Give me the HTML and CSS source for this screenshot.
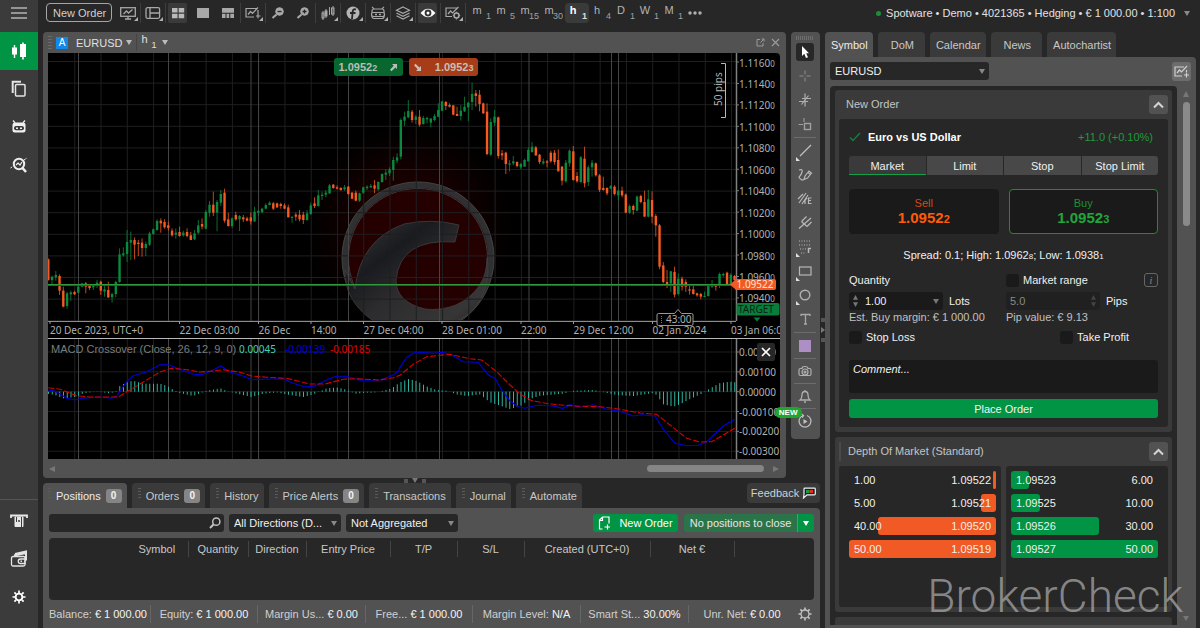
FILE: index.html
```html
<!DOCTYPE html>
<html lang="en">
<head>
<meta charset="utf-8">
<title>EURUSD h1 - Trading platform</title>
<link rel="stylesheet" href="styles.css">
</head>
<body>
<div class="app">
  <nav class="rail" aria-label="Main">
    <button class="rail-menu" aria-label="Menu"><svg width="16" height="12" viewBox="0 0 16 12" stroke="#b4b4b4" stroke-width="1.3"><path d="M0 1h16M0 6h16M0 11h16"/></svg></button>
    <button class="rail-item active" aria-label="Trade"><svg width="16" height="18" viewBox="0 0 16 18" fill="#fff"><path d="M2 5.500h.8V3h1.400v2.500H6v7H4.200V16H2.800v-3.500H1v-7zM10 2h1.200V.5h1.600V2H15v13h-2.200v2.500h-1.600V15H9V2z"/></svg></button>
    <button class="rail-item" aria-label="Copy"><svg width="16" height="18" viewBox="0 0 16 18" fill="none" stroke="#e4e4e4" stroke-width="1.5"><rect x="4.500" y="4.500" width="9.500" height="11.500" rx="1"/><path d="M1.700 13V1.700H10" stroke-width="2"/></svg></button>
    <button class="rail-item" aria-label="Automate"><svg width="16" height="16" viewBox="0 0 16 16"><path d="M2 1.500l2 2.200M14 1.500l-2 2.200" stroke="#eee" stroke-width="1.300"/><path d="M4 3.500h8q2.500 0 2.500 2.500v5.500q0 2-2 2h-9q-2 0-2-2V6q0-2.500 2.500-2.500z" fill="#f0f0f0"/><rect x="3" y="7" width="10" height="4.300" rx="2" fill="#3b3b3b"/><path d="M5 9.200h2M9 9.200h2" stroke="#f0f0f0" stroke-width="1.400"/></svg></button>
    <button class="rail-item" aria-label="Analyze"><svg width="18" height="16" viewBox="0 0 18 16" fill="none" stroke="#eee"><circle cx="9" cy="7" r="5.200" stroke-width="2"/><path d="M12.500 11l3.500 4" stroke-width="2.500"/><path d="M.5 11l3-2M14 3l3-2" stroke-dasharray="2 1"/><path d="M6 8l2-2 2 2 2-3" stroke-width="1.200"/></svg></button>
    <span class="rail-gap"></span>
    <button class="rail-item" aria-label="Deposit"><svg width="18" height="16" viewBox="0 0 18 16" fill="none" stroke="#e8e8e8"><path d="M1 5V2.500h16V5" stroke-width="1.800"/><path d="M5 4h8v9.500H5z" fill="#e8e8e8"/><path d="M6.500 4v5M11.500 4v10" stroke="#3b3b3b"/><circle cx="9" cy="8" r="1" fill="#3b3b3b" stroke="none"/></svg></button>
    <button class="rail-item" aria-label="Wallet"><svg width="18" height="18" viewBox="0 0 18 18" fill="none" stroke="#e4e4e4" stroke-width="1.300"><path d="M5 4l11-2.500v9M4 5.500L16 3" stroke-width="2"/><rect x="1.500" y="6.500" width="13.500" height="9.500" rx="1.500" fill="#3b3b3b"/><path d="M15 9h-4.500a2 2 0 0 0 0 4.500H15z"/><path d="M10.500 11.200h1.500" stroke-width="1.600"/></svg></button>
    <button class="rail-item" aria-label="Settings"><svg width="14" height="14" viewBox="0 0 14 14" fill="none" stroke="#fff"><circle cx="7" cy="7" r="3.400" stroke-width="1.900"/><path d="M7 .5v2.500M7 11v2.500M.5 7H3M11 7h2.500M2.400 2.400l1.700 1.700M9.900 9.900l1.700 1.700M2.400 11.600l1.700-1.700M9.900 4.100l1.700-1.700" stroke-width="1.700"/></svg></button>
    <button class="rail-item" aria-label="Help"><svg width="16" height="16" viewBox="0 0 16 16" fill="none" stroke="#ddd" stroke-width="1.500"><circle cx="8" cy="8" r="6"/></svg></button>
  </nav>

  <div class="workspace">
    <header class="topbar">
      <button class="new-order">New Order</button>
      <div class="tools">
        <button class="tool sub sep" aria-label="Chart type"><svg viewBox="0 0 16 14" fill="none" stroke="#a8a8a8" stroke-width="1.300"><rect x=".7" y="1.700" width="14.600" height="8.600"/><path d="M5 13h6M8 10v3M3.500 8l3-3 2 2 4-3.500"/></svg></button>
        <button class="tool sub sep" aria-label="Layouts"><svg viewBox="0 0 16 14" fill="none" stroke="#a8a8a8" stroke-width="1.300"><rect x="1" y="1.700" width="13.600" height="10.600" rx="1.500"/><path d="M5 2v10M5 7h9.500"/></svg></button>
        <button class="tool on" aria-label="Grid"><svg viewBox="0 0 16 14" fill="#b9b9b9"><path d="M2 2h5.500v4.500H2zM8.700 2h5.500v4.500H8.700zM2 7.700h5.500v4.500H2zM8.700 7.700h5.500v4.500H8.700z"/></svg></button>
        <button class="tool" aria-label="Single"><svg viewBox="0 0 16 14" fill="#a8a8a8"><path d="M2 2h12v10H2z"/></svg></button>
        <button class="tool" aria-label="Multi"><svg viewBox="0 0 16 14" fill="#a8a8a8"><path d="M2 2h12v4.700H2zM2 7.800h3.500V12H2zM6.500 7.800h2.700V12H6.500zM10.300 7.800H14V12h-3.700z"/></svg></button>
        <button class="tool sub sep-l sep" aria-label="New chart"><svg viewBox="0 0 16 14" fill="none" stroke="#a8a8a8" stroke-width="1.200"><path d="M9 11H1V2.500h11M3 8.500l2.500-3 2 2 5.500-6M13 4v4M11 10h4.500M13 7.800v4.500"/></svg></button>
        <button class="tool" aria-label="Zoom out"><svg viewBox="0 0 16 14" fill="none" stroke="#a8a8a8"><circle cx="9.500" cy="5.500" r="3.800" fill="#a8a8a8"/><path d="M7.500 5.500h4" stroke="#272727" stroke-width="1.300"/><path d="M6.500 8.500L2.500 12" stroke-width="2"/></svg></button>
        <button class="tool" aria-label="Zoom in"><svg viewBox="0 0 16 14" fill="none" stroke="#a8a8a8"><circle cx="9.500" cy="5.500" r="3.800" fill="#a8a8a8"/><path d="M7.500 5.500h4M9.500 3.500v4" stroke="#272727" stroke-width="1.300"/><path d="M6.500 8.500L2.500 12" stroke-width="2"/></svg></button>
        <button class="tool sub sep-l sep" aria-label="Candles"><svg viewBox="0 0 16 14" fill="none" stroke="#a8a8a8"><path d="M3 5v9M6 3v9M13 0v10"/><rect x="2" y="7" width="2" height="5"/><rect x="5" y="5" width="2" height="5" fill="#a8a8a8"/><rect x="11.500" y="2" width="2.500" height="6"/><path d="M9.500 1v8"/></svg></button>
        <button class="tool sub sep" aria-label="Indicators"><svg viewBox="0 0 16 14"><circle cx="8" cy="7" r="6.500" fill="#b4b4b4"/><path d="M11 3.500q-3-1-3.300 2L7 13M5 7h5.500" fill="none" stroke="#272727" stroke-width="1.800"/></svg></button>
        <button class="tool sub sep" aria-label="Robots"><svg viewBox="0 0 16 14" fill="none" stroke="#a8a8a8" stroke-width="1.200"><path d="M2 .8l2 2M14 .8l-2 2"/><rect x="2" y="3" width="12" height="9.500" rx="2"/><rect x="1.500" y="6.500" width="13" height="4" rx="2" fill="#272727"/><path d="M5 8.500h2M9 8.500h2" stroke-width="1.600"/></svg></button>
        <button class="tool sub sep" aria-label="Objects"><svg viewBox="0 0 16 14" fill="none" stroke="#a8a8a8" stroke-width="1.200"><path d="M8 1l6.500 3.200L8 7.400 1.500 4.200zM1.500 7L8 10.300 14.500 7M1.500 9.800L8 13l6.500-3.200"/></svg></button>
        <button class="tool on" aria-label="Visibility"><svg viewBox="0 0 16 14"><path d="M.5 7Q8-1.500 15.500 7 8 15.500.5 7z" fill="#fff"/><circle cx="8" cy="7" r="3.400" fill="#333"/><circle cx="8" cy="7" r="1.500" fill="#fff"/></svg></button>
        <button class="tool sub sep-l sep" aria-label="Chart settings"><svg viewBox="0 0 16 14" fill="none" stroke="#a8a8a8" stroke-width="1.200"><path d="M7 10.500H1V2h12M3 8l2.500-3 2 2L13.500 1"/><circle cx="11.500" cy="9.500" r="2.500" stroke-width="1.500"/><path d="M11.500 5.700v1M11.500 12.300v1.200M7.800 9.500h1M14 9.500h1.200" /></svg></button>
        <button class="tf">m<sub>1</sub></button>
        <button class="tf">m<sub>5</sub></button>
        <button class="tf">m<sub>15</sub></button>
        <button class="tf">m<sub>30</sub></button>
        <button class="tf on">h<sub>1</sub></button>
        <button class="tf">h<sub>4</sub></button>
        <button class="tf">D<sub>1</sub></button>
        <button class="tf">W<sub>1</sub></button>
        <button class="tf">M<sub>1</sub></button>
        <button class="tool more" aria-label="More"><svg viewBox="0 0 16 14" fill="#b0b0b0"><circle cx="3" cy="7" r="1.700"/><circle cx="8" cy="7" r="1.700"/><circle cx="13" cy="7" r="1.700"/></svg></button>
      </div>
      <button class="account"><i class="online"></i><span>Spotware • Demo • 4021365 • Hedging • € 1 000.00 • 1:100</span><i class="caret"></i></button>
    </header>

    <div class="columns">
      <main class="center">
        <div class="chart-row">
          <section class="chart-frame" aria-label="Chart">
            <div class="chart-head">
              <i class="grip"></i>
              <button class="link-badge">A</button>
              <button class="pick symbol">EURUSD<i class="caret"></i></button>
              <button class="pick period"><span>h<sub>1</sub></span><i class="caret"></i></button>
              <span class="spacer"></span>
              <button class="win" aria-label="Detach"><svg width="9" height="9" viewBox="0 0 9 9" fill="none" stroke="#9a9a9a"><path d="M4 1.500H1v6.500h6V5M5.500 1H8v2.500M8 1L4.500 4.500"/></svg></button>
              <button class="win" aria-label="Close"><svg width="9" height="9" viewBox="0 0 9 9" stroke="#9a9a9a" stroke-width="1.200"><path d="M1 1l7 7M8 1L1 8"/></svg></button>
            </div>
            <div class="plot">
              <svg id="chart" viewBox="48 53 732 406" role="img" aria-label="EURUSD hourly candles with MACD"></svg>
              <div class="quick">
                <button class="quick-sell"><b>1.0952<small>2</small></b><svg width="9" height="9" viewBox="0 0 9 9" fill="#b9beb9"><path d="M3 1h5v5L6.400 4.400 2.500 8.300 1 6.800l3.700-4z"/></svg></button>
                <button class="quick-buy"><svg width="9" height="9" viewBox="0 0 9 9" fill="#c9bdb8"><path d="M3 8h5V3L6.400 4.600 2.500 .7 1 2.200l3.700 4z"/></svg><b>1.0952<small>3</small></b></button>
              </div>
              <button class="close-ind" aria-label="Remove indicator"><svg width="10" height="10" viewBox="0 0 10 10" stroke="#fff" stroke-width="1.700"><path d="M1 1l8 8M9 1L1 9"/></svg></button>
            </div>
            <div class="hscroll"><i class="tri left"></i><span class="track"><i class="thumb"></i></span><i class="tri right"></i></div>
          </section>

          <aside class="drawbar" aria-label="Drawing tools">
            <i class="grip wide"></i>
            <button class="dt on" aria-label="Pointer"><svg viewBox="0 0 16 16" fill="#fff"><path d="M5 2v10l2.300-2.200L9 14l2-.8-1.800-4H12z"/></svg></button>
            <button class="dt" aria-label="Crosshair"><svg viewBox="0 0 16 16" stroke="#8c8c8c"><path d="M8 2.500v4M8 9.500v4M2.500 8h4M9.500 8h4"/></svg></button>
            <button class="dt" aria-label="Magnet"><svg viewBox="0 0 16 16" stroke="#b0b0b0" stroke-width="1.200"><path d="M8 1.500v13M2 9.500h9M5 6.500h9M4.500 12.500l7-9"/></svg></button>
            <button class="dt" aria-label="Snap"><svg viewBox="0 0 16 16" fill="none" stroke="#a0a0a0"><path d="M7 2v4M1.500 8.500H6"/><rect x="7.500" y="7.500" width="6" height="6" stroke-width="1.400"/></svg></button>
            <hr>
            <button class="dt sub" aria-label="Line"><svg viewBox="0 0 16 16" stroke="#c0c0c0" stroke-width="1.300"><path d="M3 13L14 2"/></svg></button>
            <button class="dt" aria-label="Pencil"><svg viewBox="0 0 16 16" fill="none" stroke="#b8b8b8" stroke-width="1.200"><path d="M2 3q4-1.500 3 2T2.500 9.500 5 13l2-.5M7 12.500l1-3.500 4-5 2.500 2-4 5zM11 5.500l2.300 1.800"/></svg></button>
            <button class="dt" aria-label="Waves"><svg viewBox="0 0 16 16" fill="none" stroke="#b8b8b8" stroke-width="1.200"><path d="M1 8l5-5M2 12l7-10M5 13l6-9M8 13V9l2-2M14.500 7h-3v5.500h3M11.500 9.500h2.500"/></svg></button>
            <button class="dt" aria-label="Pitchfork"><svg viewBox="0 0 16 16" fill="none" stroke="#b8b8b8" stroke-width="1.200"><path d="M2 13.500L14 3M4.500 6.500l5.500 5M4.500 6.500l5-5M10 11.500l4.500-4.500"/></svg></button>
            <button class="dt sub" aria-label="Fibonacci"><svg viewBox="0 0 16 16" stroke="#b8b8b8"><path d="M2 2h12M2 6h12M3 10h6M4 14h5" stroke-dasharray="1 1.500"/><path d="M11.500 14V9.500H14" fill="none" stroke-width="1.500"/></svg></button>
            <button class="dt sub" aria-label="Rectangle"><svg viewBox="0 0 16 16" fill="none" stroke="#b8b8b8" stroke-width="1.200"><rect x="2.500" y="4" width="11.500" height="8"/></svg></button>
            <button class="dt sub" aria-label="Ellipse"><svg viewBox="0 0 16 16" fill="none" stroke="#b0b0b0" stroke-width="1.400"><circle cx="8" cy="8" r="4.800"/></svg></button>
            <button class="dt" aria-label="Text"><svg viewBox="0 0 16 16" fill="none" stroke="#a8a8a8" stroke-width="1.300"><path d="M4 5V3.500h9V5M8.500 3.500V13M7 13h3"/></svg></button>
            <hr>
            <button class="dt" aria-label="Colour"><i class="swatch"></i></button>
            <hr class="tight">
            <button class="dt" aria-label="Snapshot"><svg viewBox="0 0 16 16" fill="none" stroke="#b0b0b0" stroke-width="1.200"><path d="M5 5.500q0-2 3-2t3 2h1.500q1.500 0 1.500 1.500v4q0 1.500-1.500 1.500h-9Q2 12.500 2 11V7q0-1.500 1.500-1.500z"/><ellipse cx="8" cy="9" rx="3" ry="3"/><circle cx="8" cy="9" r="1"/></svg></button>
            <hr class="tight">
            <button class="dt" aria-label="Alert"><svg viewBox="0 0 16 16" fill="none" stroke="#b0b0b0" stroke-width="1.300"><path d="M3 12q2-1.500 2-5 0-3.500 3-3.500t3 3.500q0 3.500 2 5zM7 14h2M8 2v1.500"/></svg></button>
            <hr class="tight">
            <button class="dt" aria-label="Replay"><svg viewBox="0 0 16 16" fill="none" stroke="#c0c0c0" stroke-width="1.300"><path d="M6 2.500A6 6 0 1 0 10 2.500M4.500 1l2 1.600-1.500 2"/><path d="M6.500 6v5l4-2.500z" fill="#c0c0c0" stroke="none"/></svg><span class="new">NEW</span></button>
          </aside>
        </div>

        <div class="split-h"><i></i><i class="tri down"></i><i></i></div>

        <section class="trade" aria-label="Trade watch">
          <div class="tabs">
            <button class="tab gripped active">Positions<span class="count">0</span></button>
            <button class="tab gripped">Orders<span class="count">0</span></button>
            <button class="tab gripped">History</button>
            <button class="tab gripped">Price Alerts<span class="count">0</span></button>
            <button class="tab gripped">Transactions</button>
            <button class="tab gripped">Journal</button>
            <button class="tab gripped">Automate</button>
            <button class="feedback">Feedback<svg width="14" height="12" viewBox="0 0 14 12"><path d="M3 1.200h9.500q.8 0 .8.800v5q0 .8-.8.800H5L1.500 11 2 7.500V2q0-.8 1-.8z" fill="#123" stroke="#eee" stroke-width="1.200"/><path d="M4 3h3.500v3H4z" fill="#1c9a40"/><path d="M7.500 3H11v3H7.500z" fill="#e03020"/></svg></button>
          </div>
          <div class="trade-body">
            <div class="filters">
              <label class="search"><input type="text" aria-label="Search positions"><svg width="12" height="12" viewBox="0 0 12 12" fill="none" stroke="#c0c0c0" stroke-width="1.500"><circle cx="7.300" cy="4.700" r="3.600"/><path d="M4.700 7.300L1 11" stroke-width="2"/></svg></label>
              <span class="select"><select aria-label="Direction"><option>All Directions (D...</option></select></span>
              <span class="select"><select aria-label="Aggregation"><option>Not Aggregated</option></select></span>
              <span class="spacer"></span>
              <button class="go"><svg width="13" height="14" viewBox="0 0 13 14" fill="none" stroke="#fff" stroke-width="1.200"><path d="M4.500 13H1.500V4l3-3H11v6.500M1.500 4.500h3V1M6.500 11H12M9.500 8.500v5"/></svg>New Order</button>
              <span class="closer"><button class="close-all">No positions to close</button><button class="close-more" aria-label="Close options"><i class="caret"></i></button></span>
            </div>
            <div class="grid-wrap">
              <table class="positions">
                <colgroup><col class="c-pad"><col class="c-sym"><col class="c-qty"><col class="c-dir"><col class="c-entry"><col class="c-tp"><col class="c-sl"><col class="c-date"><col class="c-net"><col></colgroup>
                <thead><tr><td></td><th>Symbol</th><th>Quantity</th><th>Direction</th><th>Entry Price</th><th>T/P</th><th>S/L</th><th>Created (UTC+0)</th><th>Net €</th><td></td></tr></thead>
              </table>
            </div>
            <div class="status">
              <span>Balance: <b>€ 1 000.00</b></span>
              <span>Equity: <b>€ 1 000.00</b></span>
              <span>Margin Us... <b>€ 0.00</b></span>
              <span>Free... <b>€ 1 000.00</b></span>
              <span>Margin Level: <b>N/A</b></span>
              <span>Smart St... <b>30.00%</b></span>
              <span>Unr. Net: <b>€ 0.00</b></span>
              <button aria-label="Status settings"><svg width="14" height="14" viewBox="0 0 14 14" fill="none" stroke="#c4c4c4"><circle cx="7" cy="7" r="4" stroke-width="1.300"/><path d="M7 .5v2.300M7 11.200v2.300M.5 7h2.300M11.200 7h2.300M2.400 2.400l1.700 1.700M9.900 9.900l1.700 1.700M2.400 11.600l1.700-1.700M9.900 4.100l1.700-1.700" stroke-width="1.600"/></svg></button>
            </div>
          </div>
        </section>
      </main>

      <div class="split-v"><i></i><i class="tri right"></i><i></i></div>

      <aside class="side" aria-label="Symbol panel">
        <div class="tabs">
          <button class="tab active">Symbol</button>
          <button class="tab">DoM</button>
          <button class="tab">Calendar</button>
          <button class="tab">News</button>
          <button class="tab">Autochartist</button>
        </div>
        <div class="side-body">
          <div class="side-head">
            <span class="select"><select aria-label="Symbol"><option>EURUSD</option></select></span>
            <button class="add-chart" aria-label="Open chart"><svg width="15" height="13" viewBox="0 0 15 13" fill="none" stroke="#d0d0d0" stroke-width="1.200"><path d="M8 11H1V2h9M3 8l2.500-3 2 2L13 1M12.500 5v2M10 10h5M12.500 7.500v5"/></svg></button>
          </div>
          <div class="side-scroll">
            <div class="cards">
              <section class="card">
                <header><h2>New Order</h2><button class="fold" aria-label="Collapse"><svg width="11" height="8" viewBox="0 0 11 8" fill="none" stroke="#d4d4d4" stroke-width="2"><path d="M1 6.500l4.500-4.500L10 6.500"/></svg></button></header>
                <form class="order">
                  <div class="instrument"><svg width="12" height="10" viewBox="0 0 12 10" fill="none" stroke="#14803c" stroke-width="1.300"><path d="M1 5.500l3 3L11 1"/></svg><strong>Euro vs US Dollar</strong><span class="delta">+11.0 (+0.10%)</span></div>
                  <div class="types"><button type="button" class="on">Market</button><button type="button">Limit</button><button type="button">Stop</button><button type="button">Stop Limit</button></div>
                  <div class="sides">
                    <button type="button" class="sell">Sell<b>1.0952<small>2</small></b></button>
                    <button type="button" class="buy">Buy<b>1.0952<small>3</small></b></button>
                  </div>
                  <p class="spread">Spread: 0.1; High: 1.0962<small>8</small>; Low: 1.0938<small>1</small></p>
                  <div class="fields">
                    <div class="field">
                      <label class="caption" for="qty">Quantity</label>
                      <div class="entry"><span class="box"><i class="step"></i><input id="qty" type="text" value="1.00"><i class="caret"></i></span><span>Lots</span></div>
                      <span class="note">Est. Buy margin: € 1 000.00</span>
                    </div>
                    <div class="field">
                      <div class="caption"><label><input type="checkbox">Market range</label><button type="button" class="info"><em>i</em></button></div>
                      <div class="entry"><span class="box off"><input type="text" aria-label="Range" value="5.0" disabled><i class="step"></i></span><span>Pips</span></div>
                      <span class="note">Pip value: € 9.13</span>
                    </div>
                  </div>
                  <div class="protect"><label><input type="checkbox">Stop Loss</label><label><input type="checkbox">Take Profit</label></div>
                  <textarea aria-label="Comment" placeholder="Comment..."></textarea>
                  <button type="button" class="place">Place Order</button>
                </form>
              </section>
              <section class="card dom">
                <header><h2>Depth Of Market (Standard)</h2><button class="fold" aria-label="Collapse"><svg width="11" height="8" viewBox="0 0 11 8" fill="none" stroke="#d4d4d4" stroke-width="2"><path d="M1 6.500l4.500-4.500L10 6.500"/></svg></button></header>
                <div class="book">
                  <ul class="bids">
                    <li><i style="width:2%"></i><span>1.00</span><span>1.09522</span></li>
                    <li><i style="width:10%"></i><span>5.00</span><span>1.09521</span></li>
                    <li><i style="width:80%"></i><span>40.00</span><span>1.09520</span></li>
                    <li><i style="width:100%"></i><span>50.00</span><span>1.09519</span></li>
                  </ul>
                  <ul class="asks">
                    <li><i style="width:12%"></i><span>1.09523</span><span>6.00</span></li>
                    <li><i style="width:20%"></i><span>1.09525</span><span>10.00</span></li>
                    <li><i style="width:60%"></i><span>1.09526</span><span>30.00</span></li>
                    <li><i style="width:100%"></i><span>1.09527</span><span>50.00</span></li>
                  </ul>
                </div>
              </section>
              <section class="card next"></section>
            </div>
            <div class="vscroll"><i class="tri up"></i><i class="thumb"></i><span class="spacer"></span><i class="tri down"></i></div>
          </div>
        </div>
      </aside>
    </div>
  </div>
  <div class="brand">BrokerCheck</div>
</div>
<script src="chart.js"></script>
</body>
</html>
```

FILE: styles.css
```css
* { box-sizing: border-box; }
body { margin: 0; background: #272727; color: #dcdcdc; font: 11px/14px "Liberation Sans", Arial, sans-serif; }
button, input, select, textarea { font: inherit; color: inherit; background: none; border: 0; padding: 0; margin: 0; border-radius: 0; outline: 0; }
button { white-space: nowrap; }
h2, p, ul { margin: 0; padding: 0; font-size: 11px; font-weight: normal; list-style: none; }
i { display: block; flex: none; }
svg { display: block; flex: none; }
.spacer { flex: 1; }

.app { display: flex; height: 100vh; overflow: hidden; position: relative; }

.rail { width: 38px; flex: none; background: #3b3b3b; display: flex; flex-direction: column; overflow: hidden; }
.rail button { display: flex; align-items: center; justify-content: center; height: 38px; flex: none; }
.rail .rail-menu { height: 32px; padding-bottom: 6px; }
.rail .active { background: #009444; }
.rail-gap { flex: 1; margin-bottom: 2px; border-bottom: 1px solid #555; }
.rail button:last-child { margin-bottom: -26px; }

.workspace { flex: 1; min-width: 0; display: flex; flex-direction: column; padding: 0 4px 0 5px; }
.topbar { height: 32px; flex: none; display: flex; align-items: flex-start; padding: 3px 6px 0 3px; }
.new-order { height: 19px; padding: 0 6px; margin-right: 3px; border: 1px solid #a6a6a6; border-radius: 4px; color: #cfcfcf; width: 66px; }
.tools { display: flex; }
.tool { position: relative; width: 25px; height: 20px; display: flex; align-items: center; justify-content: center; }
.tool svg { width: 16px; height: 14px; }
.tool.sep { box-shadow: 1px 0 #3e3e3e; }
.tool.sep-l { border-left: 1px solid #3e3e3e; }
.tool.on { background: #3a3a3a; background-clip: content-box; padding: 0 3px; border-radius: 4px; }
.sub::after { content: ""; position: absolute; right: 2px; bottom: 2px; border: 2px solid transparent; border-right-color: #b0b0b0; border-bottom-color: #b0b0b0; }
.tf { position: relative; width: 24px; height: 20px; color: #b4b4b4; line-height: 14px; padding: 0 8px 6px 0; }
.sep + .tf { margin-left: 4px; }
.tf sub { position: absolute; right: 2px; top: 7px; font-size: 9px; line-height: 12px; color: #a0a0a0; }
.tf.on { background: #3a3a3a; border-radius: 4px; color: #fff; font-weight: bold; }
.tf.on sub { color: #ddd; }
.more { width: 20px; }
.account { margin-left: auto; display: flex; align-items: center; height: 20px; color: #e2e2e2; }
.online { width: 5px; height: 5px; border-radius: 50%; background: #1c8f35; margin-right: 5px; }
.account .caret { margin-left: 9px; }
.caret { border: 3px solid transparent; border-top: 5px solid #8a8a8a; border-bottom: 0; }

.columns { flex: 1; min-height: 0; display: flex; }
.center { flex: 1; min-width: 0; display: flex; flex-direction: column; }
.chart-row { display: flex; gap: 5px; align-items: flex-start; }
.chart-frame { flex: 1; min-width: 0; background: #525252; border-radius: 4px; padding: 0 6px 0 5px; }
.chart-head { height: 21px; display: flex; align-items: center; color: #e0e0e0; }
.grip { width: 4px; height: 14px; background: repeating-linear-gradient(#6a6a6a 0 1px, transparent 1px 3px); }
.link-badge { width: 12px; height: 12px; margin: 0 8px 0 4px; background: #1189ea; color: #fff; font-size: 10px; line-height: 12px; }
.pick { display: flex; align-items: center; gap: 4px; }
.pick .caret { border-top-color: #bcbcbc; }
.period { border-left: 1px solid #444; margin-left: 4px; padding-left: 4px; gap: 5px; height: 17px; }
.period span { line-height: 12px; padding-bottom: 4px; }
.period sub { font-size: 9px; line-height: 8px; vertical-align: -5px; margin-left: 4px; }
.win { margin-left: 6px; }
.plot { position: relative; }
.plot svg#chart { width: 100%; height: auto; background: #000; border-radius: 0 4px 0 0; }
.quick { position: absolute; left: 39%; top: 5px; display: flex; gap: 6px; margin-left: 1px; }
.quick button { width: 69px; height: 18px; border-radius: 3px; display: flex; align-items: center; justify-content: space-between; padding: 0 5px 0 4px; }
.quick-sell { background: #08662f; color: #b9beb9; }
.quick-buy { background: #a63d18; color: #c9bdb8; }
.quick small { font-size: 9px; }
.close-ind { position: absolute; right: 5px; top: 290px; width: 18px; height: 18px; background: #272727; border-radius: 2px; display: flex; align-items: center; justify-content: center; }
.hscroll { height: 19px; display: flex; align-items: center; padding: 0 1px; }
.track { flex: 1; display: flex; justify-content: flex-end; padding-right: 9px; }
.hscroll .thumb { width: 117px; height: 7px; border-radius: 4px; background: #858585; }
.tri { border: 3px solid transparent; }
.tri.left { border-right: 6px solid #777; border-left: 0; }
.tri.right { border-left: 6px solid #777; border-right: 0; }
.tri.up { border-bottom: 6px solid #777; border-top: 0; }
.tri.down { border-top: 5px solid #777; border-bottom: 0; }

.drawbar { width: 29px; flex: none; background: #525252; border-radius: 4px; padding: 4px 2px 6px 0; display: flex; flex-direction: column; align-items: center; }
.grip.wide { width: 18px; height: 4px; background: repeating-linear-gradient(90deg, #6e6e6e 0 1px, transparent 1px 2px); }
.dt { position: relative; width: 20px; height: 24px; display: flex; align-items: center; justify-content: center; }
.dt svg { width: 16px; height: 16px; }
.dt.on svg { width: 18px; height: 18px; padding: 1px; background: #272727; border-radius: 3px; }
.dt.sub::after { left: 1px; right: auto; border-color: transparent transparent #e0e0e0 #e0e0e0; }
.drawbar hr { width: 22px; height: 1px; border: 0; background: #6c6c6c; margin: 1px 0; flex: none; }
.drawbar hr.tight { margin: 0; }
.swatch { width: 12px; height: 12px; background: #ad8fc6; }
.new { position: absolute; right: 13px; top: -2px; padding: 0 4px; border-radius: 6px; background: #1fa62c; color: #fff; font: bold 8px/11px "Liberation Sans", sans-serif; }

.split-h { height: 5px; flex: none; padding-right: 34px; display: flex; align-items: center; justify-content: center; gap: 4px; }
.split-h i:not(.tri), .split-v i:not(.tri) { width: 4px; height: 4px; background: #555; }
.split-v { width: 5px; flex: none; display: flex; flex-direction: column; align-items: center; justify-content: center; gap: 5px; }
.split-v .tri { border-left-width: 4px; }

.tabs { display: flex; gap: 5px; height: 25px; flex: none; }
.tab { height: 25px; background: #3a3a3a; color: #c8c8c8; border-radius: 4px 4px 0 0; padding: 0 6px; display: flex; align-items: center; gap: 5px; }
.tab.active { background: #525252; color: #ececec; }
.tab.gripped { padding: 0 5px 0 5px; }
.tab.gripped ~ .gripped { padding-left: 6px; }
.gripped::before { content: ""; width: 3px; height: 12px; margin-bottom: 4px; background: repeating-linear-gradient(#5a5a5a 0 1px, transparent 1px 3px); }
.count { width: 16px; height: 14px; border-radius: 3px; background: #858585; color: #f4f4f4; font-weight: bold; font-size: 10px; text-align: center; }
.trade { flex: 1; min-height: 0; display: flex; flex-direction: column; }
.feedback { margin-left: auto; height: 20px; width: 73px; background: #3a3a3a; border-radius: 4px; color: #d0d0d0; display: flex; align-items: center; justify-content: center; gap: 3px; }
.trade-body { flex: 1; background: #525252; border-radius: 0 4px 0 0; padding: 6px 6px 0; display: flex; flex-direction: column; }
.filters { display: flex; gap: 5px; height: 18px; }
.search, .select { background: #272727; border-radius: 3px; display: flex; align-items: center; }
.search { width: 175px; padding: 0 3px 0 6px; }
.search input { flex: 1; min-width: 0; }
.select { width: 112px; position: relative; }
.select select { appearance: none; width: 100%; height: 18px; padding: 0 5px 1px; color: #f0f0f0; line-height: 16px; }
.select::after { content: ""; position: absolute; right: 4px; top: 7px; border: 3px solid transparent; border-top: 5px solid #888; border-bottom: 0; pointer-events: none; }
.go { background: #009444; color: #fff; border-radius: 3px; width: 85px; display: flex; align-items: center; justify-content: center; gap: 8px; }
.closer { display: flex; margin-left: 1px; }
.close-all { width: 113px; background: #2b7449; color: #e6e6e6; border-radius: 3px 0 0 3px; }
.close-more { width: 17px; background: #009444; border-left: 1px solid #4d9a6b; border-radius: 0 3px 3px 0; padding: 0 5px; }
.close-more .caret { border-top-color: #fff; }
.grid-wrap { flex: 1; margin-top: 6px; background: #272727; border-radius: 4px; padding-top: 3px; }
.positions { width: 100%; table-layout: fixed; border-collapse: collapse; color: #c8c8c8; }
.positions th { height: 16px; padding: 0; font-weight: normal; text-align: center; border-right: 1px solid #444; }
.positions td { padding: 0; }
.c-pad { width: 77px; }
.c-sym { width: 62px; }
.c-qty { width: 60px; }
.c-dir { width: 58px; }
.c-entry, .c-net { width: 84px; }
.c-tp, .c-sl { width: 67px; }
.c-date { width: 126px; }
.status { height: 28px; flex: none; display: grid; grid-template-columns: 102fr 107fr 108fr 107fr 108fr 108fr 106fr 19px; align-items: center; color: #d0d0d0; }
.status span { text-align: center; line-height: 18px; border-right: 1px solid #666; white-space: nowrap; }
.status span:first-child { text-align: left; }
.status span:nth-child(7) { border: 0; }
.status b { color: #f4f4f4; font-weight: normal; }
.status button { display: flex; justify-content: center; }

.side { width: 371px; flex: none; display: flex; flex-direction: column; }
.side .tab { padding: 0 5px 0 6px; }
.side .tab:nth-child(2), .side .tab:nth-child(4) { padding: 0 11px 0 13px; }
.side-body { flex: 1; min-height: 0; background: #525252; border-radius: 0 4px 0 0; padding: 5px 5px 3px; display: flex; flex-direction: column; }
.side-head { display: flex; justify-content: space-between; height: 24px; }
.side-head .select { width: 159px; height: 18px; }
.add-chart { width: 19px; height: 19px; background: #6c6c6c; border-radius: 3px; display: flex; align-items: center; justify-content: center; }
.side-scroll { flex: 1; min-height: 0; display: flex; }
.cards { flex: 1; background: #272727; border-radius: 4px 4px 0 0; padding: 4px 5px 0; overflow: hidden; display: flex; flex-direction: column; gap: 5px; }
.vscroll { width: 14px; display: flex; flex-direction: column; align-items: center; gap: 5px; padding: 5px 0 4px 4px; }
.vscroll .thumb { width: 7px; height: 124px; border-radius: 4px; background: #8a8a8a; }
.card { background: #3a3a3a; border-radius: 3px; padding: 5px 4px 5px; flex: none; }
.card header { height: 24px; display: flex; justify-content: space-between; padding: 0 0 0 7px; }
.card h2 { line-height: 18px; color: #c4c4c4; }
.dom header { padding-left: 9px; box-shadow: inset 2px 0 #4a4a4a; height: 19px; margin-bottom: 5px; }
.fold { width: 19px; height: 19px; background: #525252; border-radius: 3px; display: flex; align-items: center; justify-content: center; }
.order { background: #272727; border-radius: 3px; padding: 9px 10px; display: flex; flex-direction: column; }
.instrument { display: flex; align-items: center; height: 18px; padding-right: 5px; }
.instrument strong { color: #fff; margin-left: 7px; flex: 1; }
.delta { color: #229a3b; }
.types { display: grid; grid-template-columns: repeat(4, 1fr); gap: 1px; margin-top: 10px; height: 19px; }
.types button { background: #484848; color: #f0f0f0; }
.types button.on { background: #3a3a3a; box-shadow: inset 0 -1px #12a04a; border-radius: 3px 0 0 0; }
.types button:last-child { border-radius: 0 3px 3px 0; }
.sides { display: grid; grid-template-columns: 1fr 1fr; gap: 10px; margin-top: 14px; }
.sides button { height: 45px; background: #1a1a1a; border-radius: 4px; display: flex; flex-direction: column; align-items: center; justify-content: center; line-height: 13px; }
.sides b { font-size: 15px; line-height: 16px; }
.sides small { font-size: 11px; }
.sell { color: #d04a18; }
.sell b { color: #ff5a0a; }
.buy { color: #1f8f35; }
.sides .buy { border: 1px solid #1d8a35; }
.buy b { color: #22a53b; }
.spread { text-align: center; margin-top: 14px; color: #f0f0f0; }
.spread small { font-size: 8px; }
.fields { display: grid; grid-template-columns: 157fr 152fr; margin-top: 8px; color: #f0f0f0; }
.caption { display: flex; height: 16px; align-items: center; justify-content: space-between; }
.entry { display: flex; gap: 6px; height: 18px; align-items: center; margin-top: 4px; }
.box { width: 94px; height: 18px; background: #1a1a1a; border-radius: 3px; display: flex; align-items: center; padding: 0 4px; gap: 7px; }
.box input { flex: 1; min-width: 0; width: 20px; }
.box.off { color: #8a8a8a; background: #202020; }
.step { width: 5px; height: 12px; background: #777; clip-path: polygon(50% 0, 100% 40%, 0 40%, 50% 0, 50% 100%, 100% 60%, 0 60%, 50% 100%); }
.off .step { background: #444; }
.box .caret { border-top-color: #777; }
.note { display: block; color: #c0c0c0; }
label { display: flex; align-items: center; }
input[type="checkbox"] { appearance: none; width: 13px; height: 13px; background: #1a1a1a; border-radius: 3px; margin-right: 4px; }
.info { width: 14px; height: 14px; border: 1px solid #666; border-radius: 3px; color: #8a8a8a; font: 10px/11px "Liberation Serif", serif; }
.protect { display: flex; justify-content: space-between; padding-right: 29px; margin-top: 5px; height: 16px; color: #f0f0f0; }
.order textarea { height: 33px; margin-top: 15px; background: #1a1a1a; border-radius: 3px; resize: none; padding: 2px 4px; }
.order textarea::placeholder { color: #f0f0f0; font-style: italic; opacity: 1; }
.place { height: 19px; margin-top: 6px; background: #009444; color: #f4f4f4; border-radius: 3px; }
.book { display: grid; grid-template-columns: 1fr 1fr; gap: 5px; height: 141px; }
.book ul { background: #272727; border-radius: 3px; display: flex; flex-direction: column; gap: 5px; padding: 5px 5px 0 10px; }
.book .asks { padding: 5px 10px 0 5px; }
.book li { position: relative; height: 18px; display: flex; justify-content: space-between; align-items: center; padding: 0 5px; color: #f0f0f0; }
.book li span { position: relative; }
.book li i { position: absolute; top: 0; bottom: 0; border-radius: 3px; }
.bids i { right: 0; background: #f15a24; }
.asks i { left: 0; background: #009444; }
.card.next { height: 40px; }
.brand { position: absolute; right: 17px; bottom: 5px; font: 300 46px/54px Roboto, Lato, sans-serif; color: rgba(175, 175, 175, 0.7); pointer-events: none; }

.axis, .stamp { font-family: "Noto Sans", "Open Sans", sans-serif; font-size: 10px; fill: #b0b0b0; }
.title { font-size: 11px; fill: #7c7c7c; }
```

FILE: chart.js
```js
const svg = document.getElementById('chart');
const out = [];
const line = (x1, y1, x2, y2, c, w = 1) =>
  out.push(`<line x1="${x1}" y1="${y1}" x2="${x2}" y2="${y2}" stroke="${c}" stroke-width="${w}"/>`);
const text = (x, y, s, cls = 'axis', extra = '') =>
  out.push(`<text x="${x}" y="${y}" class="${cls}" ${extra}>${s}</text>`);

// Backdrop emblem
out.push(`<defs>
<radialGradient id="glow"><stop offset=".4" stop-color="#1c0000"/><stop offset=".75" stop-color="#0a0000"/><stop offset="1" stop-color="#000"/></radialGradient>
<linearGradient id="metal" x1="0" y1="0" x2="1" y2="1"><stop offset="0" stop-color="#3a3a3a"/><stop offset=".3" stop-color="#1a1b1f"/><stop offset=".5" stop-color="#2c2c2e"/><stop offset=".8" stop-color="#363636"/><stop offset="1" stop-color="#1c1c20"/></linearGradient>
<clipPath id="top"><rect x="48" y="53" width="688" height="268"/></clipPath></defs>
<g clip-path="url(#top)">
<circle cx="410" cy="228" r="105" fill="url(#glow)"/>
<circle cx="418" cy="258" r="73" fill="#250000" stroke="#303032" stroke-width="6"/>
<circle cx="418" cy="258" r="76" fill="none" stroke="#444"/>
<circle cx="418" cy="258" r="69.500" fill="none" stroke="#3c3c3c"/>
<path d="M459 225Q432 218 404 224Q360 240 355 289L345 270Q344 300 372 320Q420 348 470 313Q492 290 487 258Q487 290 456 305Q440 311 425 309Q396 302 396 280Q400 238 455 242Z" fill="url(#metal)" stroke="#404040" stroke-width=".8"/>
</g>`);

// Grid
for (let k = 1; k < 27; k++) {
  const x = 48.500 + 26.270 * k;
  if (x < 735) line(x, 53, x, 459, '#1f1f21');
}
for (let k = 0; k < 13; k++) line(48, 61.500 + 21.600 * k, 736, 61.500 + 21.600 * k, '#1f1f21');
for (let k = 0; k < 6; k++) line(48, 352 + 19.850 * k, 736, 352 + 19.850 * k, '#1f1f21');
[78.500, 168.500, 251, 258.500, 348.500, 439.500, 529, 611.500, 618.500].forEach(x => line(x, 53, x, 459, '#444'));

// Candles: high, body top, body bottom, low, direction; in thirds of a unit from each block's base
const blocks = [
  [160, `295 298 360 362 R,347 350 360 375 G,333 345 352 362 G,343 348 392 405 R,380 392 440 442 R,395 400 438 446 G,392 397 403 422 G,392 396 403 405 R,377 380 398 400 G,370 370 380 382 G,366 370 380 400 R,373 378 384 390 R,375 378 382 390 G,360 368 375 384 G,362 365 392 405 R,378 388 395 410 G,365 390 412 414 R,398 402 412 428 G,362 366 402 412 G,265 283 366 368 G,262 280 286 290 G,210 246 282 306 G,215 240 248 300 G,232 240 254 298 R,240 248 252 288 R,235 248 264 290 R,245 252 264 288 G,215 220 254 258 G,205 208 222 224 G,178 183 210 212 G,175 182 190 218 R,178 186 202 206 R,185 196 204 212 R,205 212 226 230 R,205 218 224 236 G,200 216 228 230 R,212 218 226 230 G,205 216 228 232 R,216 226 240 240 R,210 220 238 240 G,180 196 218 222 G,175 192 200 208 R,150 156 206 208 G,123 134 158 170 G,95 134 158 168 R,120 126 158 214 G,90 102 128 138 G,86 98 182 188 R,158 178 198 200 R,172 175 198 204 G,155 165 178 182 R,165 168 178 213 G,165 172 178 186 R,170 175 182 184 R,158 172 184 194 R,140 155 184 186 G,150 153 158 168 G,143 146 156 160 G,130 135 146 148 G,124 128 135 136 G,126 130 146 150 R,128 130 142 144 R,128 132 138 146 R,130 136 146 148 R,134 142 172 172 R,168 171 173 188 G,158 164 170 182 R,150 164 178 184 R,155 164 180 192 R,150 160 180 182 G,128 136 162 165 G,112 130 138 144 R,90 106 138 140 G,95 104 108 120 G,90 98 104 112 G,72 76 100 102 G,72 74 84 86 R,76 82 86 88 R,82 84 90 92 R,75 82 88 92 G,78 80 102 104 R,96 98 116 118 R,92 98 122 124 R,98 100 122 126 G,80 82 98 102 G,76 80 84 90 G,72 78 82 84 G,60 76 86 100 R,64 66 88 92 G,40 42 66 68 G,28 38 44 60 G,22 28 40 48 G,-10 0 30 62 G,-20 -8 2 10 G`],
  [0, `355 360 470 478 G,335 350 362 378 G,300 333 352 355 G,330 335 360 368 R,345 350 360 372 G,330 350 374 380 R,348 354 372 374 G,350 354 358 370 G,354 356 368 382 G,342 348 360 364 G,310 330 350 352 G,303 304 332 334 G,303 306 318 330 R,310 315 320 322 R,316 316 344 346 R,320 342 348 348 R,316 332 348 362 G,290 320 334 336 G,305 308 322 364 G,248 282 306 330 G,270 280 288 320 R,270 284 312 334 R,308 310 340 342 R,310 335 462 466 R,355 366 464 468 G,330 350 368 378 G,350 352 468 476 R,450 460 466 480 R,455 458 492 522 R,480 490 494 514 G,468 484 490 496 G,484 486 498 502 R,488 492 502 508 G,476 480 500 500 G,442 450 484 484 G,426 440 456 458 G,438 442 466 468 R,462 464 486 492 R,476 484 490 494 G,480 484 488 502 R,452 458 484 488 R,450 458 486 494 R,448 480 514 514 R,498 500 542 556 R,480 488 544 548 G,448 452 490 500 G,438 454 540 542 R,516 528 544 548 R,468 472 546 550 G,440 476 550 562 R,496 502 546 558 G,480 488 502 530 G,488 490 526 530 R,522 526 570 576 R,530 564 570 572 R,562 564 580 586 R,555 558 566 566 G,556 560 582 586 R,570 572 586 600 G,560 572 586 592 R`],
  [160, `100 104 158 160 R,134 138 158 162 G,134 138 150 164 R,106 110 152 154 G,104 108 126 130 R,92 126 170 170 R,90 118 170 172 G,94 120 170 190 R,162 168 196 230 R,192 196 320 328 R,306 316 366 370 R,330 366 372 384 R,332 334 370 396 G,320 336 404 412 R,340 356 402 406 G,350 356 380 392 R,358 366 380 396 R,375 388 392 404 R,375 388 402 404 R,398 400 406 410 R,398 402 410 418 R,395 408 410 412 G,372 378 408 410 G,360 375 380 384 G,372 374 380 392 R,338 342 374 384 G,338 342 346 350 G,335 338 372 374 R,340 344 374 376 G,345 348 360 362 R`]
];
let n = 0;
for (const [base, rows] of blocks) {
  for (const row of rows.split(',')) {
    const p = row.trim().split(' ');
    const [h, t, b, l] = p.slice(0, 4).map(v => base + v / 3);
    const x = 48.300 + 3.750 * n++;
    const c = p[4] === 'R' ? '#f45a22' : '#0a8a3e';
    line(x, h, x, l, c, 0.8);
    out.push(`<rect x="${x - 1.200}" y="${t}" width="2.400" height="${Math.max(b - t, 1)}" fill="${c}"/>`);
  }
}

// MACD
const at = (pts, x) => {
  for (let i = 1; i < pts.length; i++) {
    if (x <= pts[i][0]) {
      const [a, b] = [pts[i - 1], pts[i]];
      return a[1] + (b[1] - a[1]) * (x - a[0]) / (b[0] - a[0]);
    }
  }
  return pts[pts.length - 1][1];
};
const parse = s => s.split(' ').map(p => p.split(',').map(Number));
const hist = parse('144,-6 165,-10 190,-20 225,-16 250,-5 290,1 330,-5 350,2 360,18 380,28 400,33 430,24 480,24 500,18 520,6 540,-4 580,-13 620,3 662,10 680,2 720,-8 755,-16 790,-6 830,-2 870,-10 910,-16 940,-8 980,10 1010,13 1040,6 1065,-6 1100,-3 1120,-3 1150,3 1175,10 1200,28 1225,38 1250,32 1280,16 1310,5 1340,3 1370,-8 1400,-13 1440,-8 1470,-32 1510,-45 1530,-52 1560,-44 1590,-22 1620,-12 1690,-6 1720,3 1780,5 1850,-10 1900,-13 1960,-4 1970,-10 1990,-38 2020,-45 2040,-38 2070,-22 2110,-4 2130,10 2160,26 2190,30 2206,28');
for (let i = 0; i < n; i++) {
  const x = 48.500 + 3.750 * i;
  line(x, 391.700, x, 391.700 - at(hist, x * 3) / 3, '#2fb5a0', 1);
}
const poly = (s, c, dash) => out.push(`<polyline points="${parse(s).map(([x, y]) => `${(x / 3).toFixed(1)},${(330 + y / 3).toFixed(1)}`).join(' ')}" fill="none" stroke="${c}" stroke-width="1.100" ${dash}/>`);
poly('145,180 165,184 180,192 200,205 225,210 245,205 300,201 335,205 350,198 380,155 400,137 440,125 480,104 505,104 540,118 580,133 605,134 640,120 662,108 690,126 730,138 755,149 790,148 850,146 880,160 915,171 945,168 985,147 1010,139 1040,139 1080,151 1140,150 1175,137 1195,125 1200,112 1220,82 1245,66 1300,70 1330,67 1355,75 1390,95 1435,97 1465,135 1485,145 1505,180 1530,213 1555,230 1575,235 1610,226 1660,228 1688,235 1710,224 1740,232 1780,224 1820,238 1860,244 1900,258 1925,254 1965,258 1990,298 2025,340 2060,347 2095,346 2120,335 2170,288 2204,268', '#0000e0', '');
poly('145,173 180,178 230,197 270,201 355,201 390,180 440,150 480,126 515,115 560,119 600,126 640,123 670,119 720,127 755,138 800,142 860,145 930,162 975,162 1030,148 1060,146 1140,150 1180,143 1200,136 1205,131 1240,103 1280,80 1350,73 1410,86 1445,90 1490,125 1530,165 1560,192 1595,212 1650,222 1720,228 1800,230 1850,236 1920,249 1970,253 2010,285 2060,325 2100,336 2135,335 2170,315 2204,295', '#d80000', 'stroke-dasharray="6 2"');

// Axes
line(48, 284.500, 736, 284.500, '#2f9a3c');
line(48, 285.500, 736, 285.500, '#7a3a18');
line(736.500, 53, 736.500, 321, '#808080', 1.500);
line(736.500, 339, 736.500, 459, '#808080', 1.500);
line(48, 321.500, 736, 321.500, '#8c8c8c');
out.push('<rect x="48" y="322" width="732" height="16" fill="#000"/>');
line(48, 338.500, 780, 338.500, '#b8b8b8');
[[50, '20 Dec 2023, UTC+0'], [179.500, '22 Dec 03:00'], [258.500, '26 Dec'], [311, '14:00'], [363.500, '27 Dec 04:00'], [442, '28 Dec 01:00'], [521, '22:00'], [573.500, '29 Dec 12:00'], [652.500, '02 Jan 2024'], [731, '03 Jan 06:00']]
  .forEach(([x, s]) => { line(x, 321, x, 324, '#999'); text(x, 334, s); });
for (let k = 0; k < 12; k++) {
  const y = 62.500 + 21.450 * k;
  line(737, y - .5, 739, y - .5, '#808080');
  text(739, y + 4, `${(1.116 - 0.002 * k).toFixed(4)}<tspan font-size="8">0</tspan>`);
}
['0.00200', '0.00100', '0.00000', '-0.00100', '-0.00200', '-0.00300'].forEach((s, k) => {
  line(737, 352 + 19.850 * k, 739, 352 + 19.850 * k, '#808080');
  text(739, 356 + 19.850 * k, s);
});
text(51, 353, 'MACD Crossover (Close, 26, 12, 9, 0)', 'title');
text(239, 353, '0.00045', 'stamp', 'style="fill:#40d0b8"');
text(285, 353, '-0.00139', 'stamp', 'style="fill:#0000e0"');
text(330, 353, '-0.00185', 'stamp', 'style="fill:#e00000"');

// Scale ruler, last price and target tags, bar countdown
out.push('<path d="M721 63.500h4.500v54H721" fill="none" stroke="#b8b8b8"/>');
text(0, 0, '50 pips', 'axis', 'transform="translate(722 106) rotate(-90)"');
out.push(`<path d="M730 284.500l6-5.500h38q2 0 2 2v7q0 2-2 2h-38z" fill="#f15a24"/>
<rect x="736.500" y="303" width="43" height="12.500" rx="2" fill="#0a7d3c"/><path d="M753.500 317.500h7l-3.500 4z" fill="#0a7d3c"/>
<path d="M658.500 313.500h16l3.500-4 3.500 4h10q1.500 0 1.500 1.500v9q0 1.500-1.500 1.500h-33q-1.500 0-1.500-1.500v-9q0-1.500 1.500-1.500z" fill="#000" stroke="#999"/>
<path d="M661.500 316v8" stroke="#777" stroke-dasharray="1 1"/>`);
text(736.500, 288, '1.09522', 'stamp', 'style="fill:#ffe4d8"');
text(738, 313, 'TARGET', 'stamp', 'style="fill:#062414"');
text(666, 323, '43:00', 'stamp');
svg.innerHTML = out.join('');
```
